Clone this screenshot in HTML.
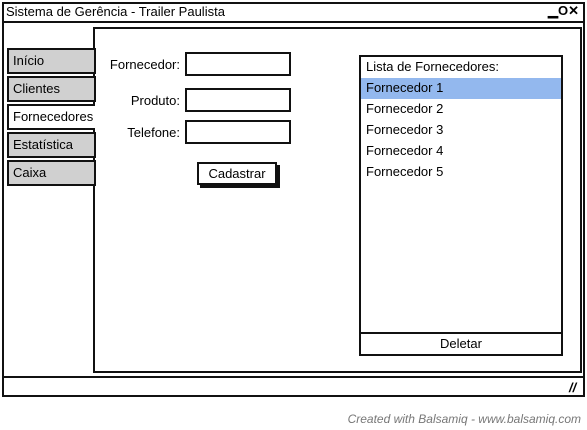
<!DOCTYPE html>
<html><head><meta charset="utf-8"><style>
*{margin:0;padding:0;box-sizing:border-box}
body{width:587px;height:430px;background:#fff;position:relative;overflow:hidden;font-family:"Liberation Sans",sans-serif;font-size:13px;color:#000}
.a{position:absolute}
.win{left:2px;top:2px;width:583px;height:395px;border:2px solid #111}
.title{left:6px;top:4px;font-size:13px}
.tline{left:2px;top:21px;width:583px;height:2px;background:#111}
.panel{left:93px;top:27px;width:489px;height:346px;border:2px solid #111;background:#fff}
.tab{left:7px;width:89px;height:26px;border:2px solid #111;background:#d0d0d0;padding:3px 0 0 4px}
.tab.sel{background:#fff;border-right:none;width:88px}
.lbl{width:90px;text-align:right}
.inp{left:185px;width:106px;height:24px;border:2px solid #111;background:#fff}
.btn{left:197px;top:162px;width:80px;height:23px;border:2px solid #111;text-align:center;padding-top:2px;box-shadow:3px 3px 0 #111;background:#fff}
.list{left:359px;top:55px;width:204px;height:301px;border:2px solid #111;background:#fff}
.row{left:0;width:200px;height:21px;padding:2px 0 0 5px}
.status{left:2px;top:376px;width:583px;height:21px;border:2px solid #111}
.foot{right:6px;top:412px;font-style:italic;color:#777;font-size:12px}
</style></head><body>
<div class="a win"></div>
<div class="a title">Sistema de Gerência - Trailer Paulista</div>
<div class="a" style="right:8px;top:3px;font-weight:bold;font-size:13px">▁O✕</div>
<div class="a tline"></div>
<div class="a panel"></div>
<div class="a tab" style="top:48px">Início</div>
<div class="a tab" style="top:76px">Clientes</div>
<div class="a tab sel" style="top:104px">Fornecedores</div>
<div class="a tab" style="top:132px">Estatística</div>
<div class="a tab" style="top:160px">Caixa</div>
<div class="a lbl" style="left:90px;top:57px">Fornecedor:</div>
<div class="a lbl" style="left:90px;top:93px">Produto:</div>
<div class="a lbl" style="left:90px;top:125px">Telefone:</div>
<div class="a inp" style="top:52px"></div>
<div class="a inp" style="top:88px"></div>
<div class="a inp" style="top:120px"></div>
<div class="a btn">Cadastrar</div>
<div class="a list">
<div class="a row" style="top:0">Lista de Fornecedores:</div>
<div class="a row" style="top:21px;background:#93b8ee">Fornecedor 1</div>
<div class="a row" style="top:42px">Fornecedor 2</div>
<div class="a row" style="top:63px">Fornecedor 3</div>
<div class="a row" style="top:84px">Fornecedor 4</div>
<div class="a row" style="top:105px">Fornecedor 5</div>
<div class="a" style="left:0;top:275px;width:200px;height:2px;background:#111"></div>
<div class="a" style="left:0;top:279px;width:200px;text-align:center">Deletar</div>
</div>
<div class="a status"></div>
<div class="a" style="left:569px;top:380px;font-weight:bold;font-style:italic;font-size:13px">//</div>
<div class="a foot">Created with Balsamiq - www.balsamiq.com</div>
</body></html>
